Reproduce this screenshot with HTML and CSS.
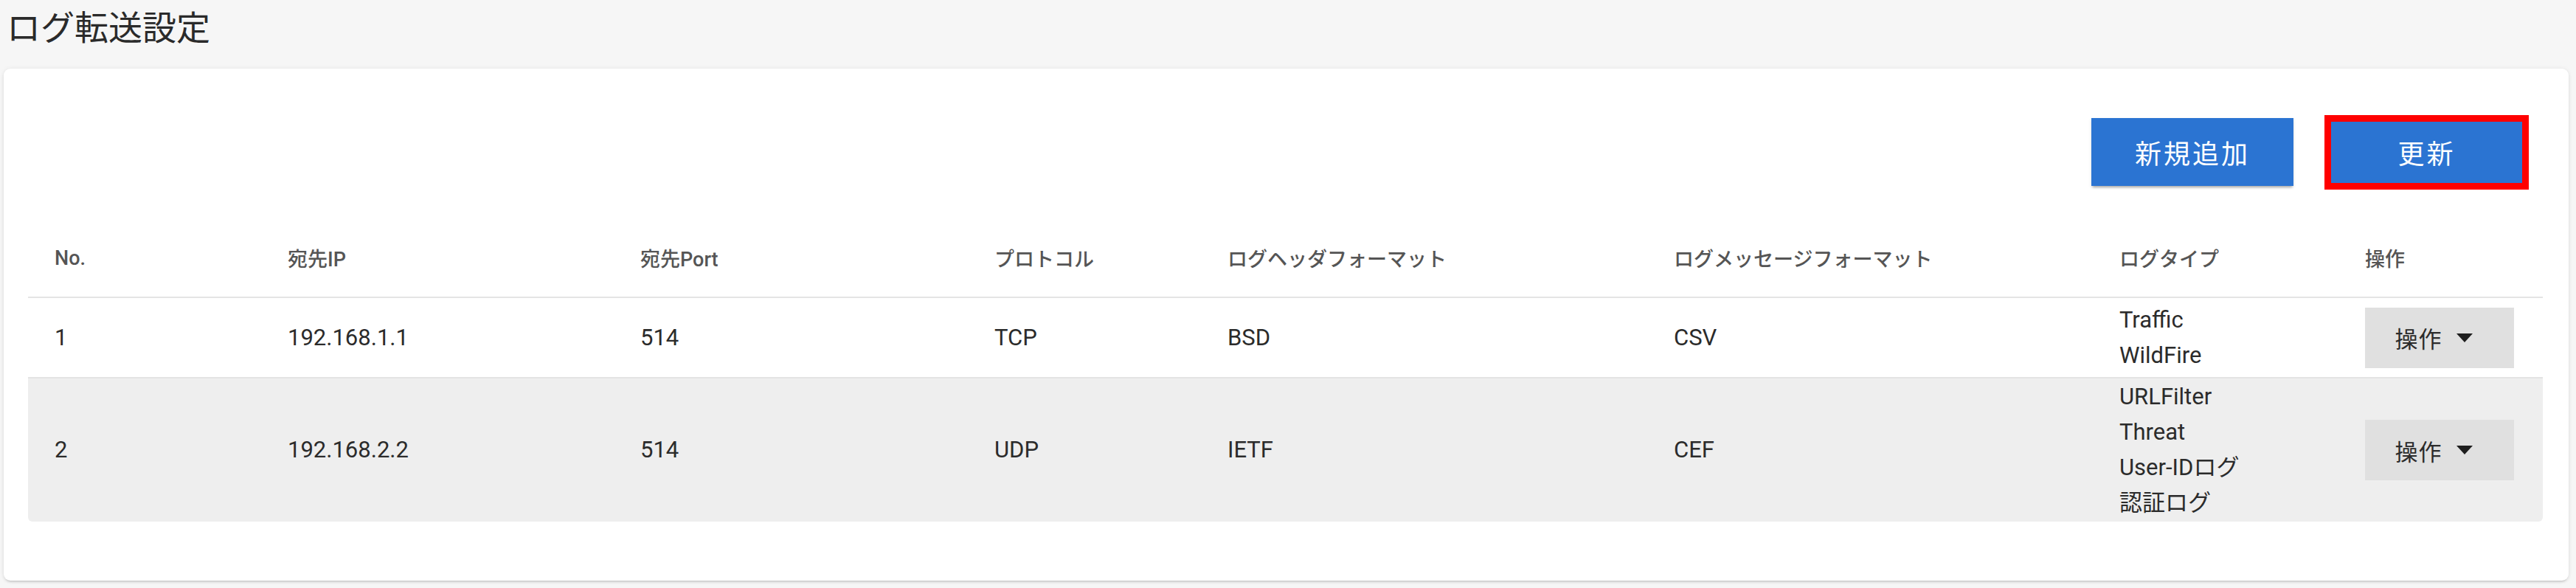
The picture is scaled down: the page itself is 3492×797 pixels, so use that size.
FILE: index.html
```html
<!DOCTYPE html>
<html lang="ja">
<head>
    <meta charset="UTF-8">
    <meta name="viewport" content="width=device-width, initial-scale=1.0">
    <title>ログ転送設定</title>
    <link rel="stylesheet" href="styles.css">
</head>
<body>
    <h1 class="page-title">ログ転送設定</h1>

    <div class="card">
        <div class="toolbar">
            <button class="btn btn-primary btn-raised">新規追加</button>
            <button class="btn btn-primary btn-marked">更新</button>
        </div>

        <table class="log-table">
            <colgroup>
                <col class="col-no">
                <col class="col-ip">
                <col class="col-port">
                <col class="col-proto">
                <col class="col-header">
                <col class="col-message">
                <col class="col-type">
                <col class="col-action">
            </colgroup>
            <thead>
                <tr>
                    <th>No.</th>
                    <th>宛先IP</th>
                    <th>宛先Port</th>
                    <th>プロトコル</th>
                    <th>ログヘッダフォーマット</th>
                    <th>ログメッセージフォーマット</th>
                    <th>ログタイプ</th>
                    <th>操作</th>
                </tr>
            </thead>
            <tbody>
                <tr>
                    <td>1</td>
                    <td>192.168.1.1</td>
                    <td>514</td>
                    <td>TCP</td>
                    <td>BSD</td>
                    <td>CSV</td>
                    <td class="types">
                        <div>Traffic</div>
                        <div>WildFire</div>
                    </td>
                    <td>
                        <button class="btn btn-menu">操作<span class="caret-box"><span class="caret"></span></span></button>
                    </td>
                </tr>
                <tr class="row-alt">
                    <td>2</td>
                    <td>192.168.2.2</td>
                    <td>514</td>
                    <td>UDP</td>
                    <td>IETF</td>
                    <td>CEF</td>
                    <td class="types">
                        <div>URLFilter</div>
                        <div>Threat</div>
                        <div>User-IDログ</div>
                        <div>認証ログ</div>
                    </td>
                    <td>
                        <button class="btn btn-menu">操作<span class="caret-box"><span class="caret"></span></span></button>
                    </td>
                </tr>
            </tbody>
        </table>
    </div>
</body>
</html>
```

FILE: styles.css
```css
body {
    margin: 0;
    padding: 0 10px 10px 5px;
    background-color: #f6f6f6;
    font-family: Roboto, "Noto Sans CJK JP", sans-serif;
    color: #2b2b2b;
}

.page-title {
    margin: 0 0 36px 0;
    padding: 12px 0 0 4px;
    font-family: "Noto Sans CJK JP", sans-serif;
    font-size: 46px;
    line-height: 45px;
    font-weight: 400;
    color: #2a2a2a;
}

.card {
    background-color: #fff;
    border-radius: 9px;
    box-shadow: 0 4px 3px -3px rgba(0, 0, 0, 0.15), 0 2px 4px rgba(0, 0, 0, 0.08), 0 0 6px rgba(0, 0, 0, 0.06);
    padding: 0 35px 80px 33px;
    height: 694px;
    box-sizing: border-box;
}

.toolbar {
    display: flex;
    justify-content: flex-end;
    align-items: center;
    gap: 51px;
    height: 182px;
    padding: 22px 28px 0 0;
}

.btn {
    border: none;
    cursor: pointer;
    font-family: "Noto Sans CJK JP", sans-serif;
}

.btn-primary {
    background-color: #2b74d2;
    color: #fff;
    font-size: 36px;
    letter-spacing: 3px;
    font-weight: 400;
}

.btn-raised {
    width: 274px;
    height: 92px;
    box-shadow: 0 4px 3px -2px rgba(0, 0, 0, 0.25), 0 2px 4px rgba(0, 0, 0, 0.12);
}

/* red highlight around the update button */
.btn-marked {
    width: 259px;
    height: 83px;
    outline: 9px solid #ff0000;
}

.log-table {
    width: 100%;
    table-layout: fixed;
    border-collapse: separate;
    border-spacing: 0;
}

.col-no { width: 316px; }
.col-ip { width: 478px; }
.col-port { width: 480px; }
.col-proto { width: 316px; }
.col-header { width: 605px; }
.col-message { width: 604px; }
.col-type { width: 333px; }
.col-action { width: 277px; }

.log-table th {
    height: 105px;
    padding: 0 36px;
    text-align: left;
    font-size: 27px;
    font-weight: 500;
    color: #555;
    border-bottom: 2px solid #e4e4e4;
    white-space: nowrap;
}

.log-table td {
    height: 107px;
    padding: 0 36px;
    font-size: 31px;
    line-height: 48px;
    vertical-align: middle;
    white-space: nowrap;
}

.log-table tbody tr:first-child td {
    border-bottom: 2px solid #e4e4e4;
}

.row-alt td {
    background-color: #eeeeee;
    padding-top: 1px;
    padding-bottom: 1px;
}

.row-alt td:first-child {
    border-bottom-left-radius: 6px;
}

.row-alt td:last-child {
    border-bottom-right-radius: 6px;
}

.btn-menu {
    display: flex;
    align-items: center;
    justify-content: center;
    width: 202px;
    height: 82px;
    padding: 0;
    background-color: #e0e0e0;
    color: #2b2b2b;
    font-size: 31px;
    letter-spacing: 1px;
}

.caret-box {
    display: inline-flex;
    justify-content: center;
    align-items: center;
    width: 53px;
    margin-left: 4px;
}

.caret {
    width: 0;
    height: 0;
    border-left: 11px solid transparent;
    border-right: 11px solid transparent;
    border-top: 12px solid #1e1e1e;
}
```
